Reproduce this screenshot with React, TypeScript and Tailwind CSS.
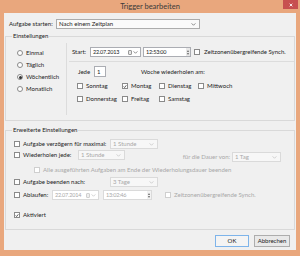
import React from 'react';

const font = { fontFamily: '"Lato", "Open Sans", sans-serif' };

function Check({ checked = false, disabled = false }: { checked?: boolean; disabled?: boolean }) {
  return (
    <span
      className={`flex h-[6px] w-[6px] shrink-0 items-center justify-center border bg-white ${
        disabled ? 'border-[#cfcfcf] bg-[#f4f4f4]' : 'border-[#8a8a8a]'
      }`}
    >
      {checked && (
        <svg viewBox="0 0 6 6" className="h-[5px] w-[5px]">
          <path d="M1 3 L2.4 4.5 L5 1.2" fill="none" stroke="#222" strokeWidth="1.1" />
        </svg>
      )}
    </span>
  );
}

function Radio({ checked = false }: { checked?: boolean }) {
  return (
    <span className="flex h-[6px] w-[6px] shrink-0 items-center justify-center rounded-full border border-[#8a8a8a] bg-white">
      {checked && <span className="h-[3px] w-[3px] rounded-full bg-[#333]" />}
    </span>
  );
}

function Arrow({ light = false }: { light?: boolean }) {
  return (
    <svg viewBox="0 0 6 4" className="h-[3px] w-[5px]">
      <path d="M0.5 0.5 L3 3 L5.5 0.5" fill="none" stroke={light ? '#bdbdbd' : '#555'} strokeWidth="0.9" />
    </svg>
  );
}

function Combo({ text, w, disabled = false }: { text: string; w: string; disabled?: boolean }) {
  return (
    <div
      className={`flex h-[10px] items-center justify-between border pl-[2px] pr-[3px] ${w} ${
        disabled ? 'border-[#dadada] bg-[#f7f7f7] text-[#a8a8a8]' : 'border-[#acacac] bg-[#fafafa] text-[#222]'
      }`}
    >
      <span>{text}</span>
      <Arrow light={disabled} />
    </div>
  );
}

function DateBox({ text, w, disabled = false }: { text: string; w: string; disabled?: boolean }) {
  return (
    <div
      className={`flex h-[10px] items-center justify-between border bg-white pl-[2px] pr-[2px] ${w} ${
        disabled ? 'border-[#dadada] text-[#a8a8a8]' : 'border-[#abadb3] text-[#222]'
      }`}
    >
      <span className="text-[5.5px] tracking-[-0.2px]">{text}</span>
      <span className="flex items-center gap-[1px]">
        <span className={`h-[5px] w-[4px] rounded-[1px] border ${disabled ? 'border-[#d0d0d0] bg-[#eee]' : 'border-[#9a9a9a] bg-[#e6e6e6]'}`} />
        <Arrow light={disabled} />
      </span>
    </div>
  );
}

function TimeBox({ text, w, disabled = false }: { text: string; w: string; disabled?: boolean }) {
  return (
    <div
      className={`flex h-[10px] items-center justify-between border bg-white pl-[2px] ${w} ${
        disabled ? 'border-[#dadada] text-[#a8a8a8]' : 'border-[#abadb3] text-[#222]'
      }`}
    >
      <span className="text-[5.5px] tracking-[-0.2px]">{text}</span>
      <span className={`flex h-full w-[4px] flex-col items-center justify-center gap-[1px] ${disabled ? 'bg-[#f2f2f2]' : 'bg-[#e8e8e8]'}`}>
        <span className="h-0 w-0 border-x-[1.5px] border-b-[2px] border-x-transparent border-b-[#666]" />
        <span className="h-0 w-0 border-x-[1.5px] border-t-[2px] border-x-transparent border-t-[#666]" />
      </span>
    </div>
  );
}

export default function App() {
  return (
    <div className="flex h-[256px] w-[300px] flex-col bg-[#e9a77d] text-[6px] leading-[8px] text-[#222]" style={font}>
      {/* Title bar */}
      <div className="relative flex h-[13px] items-center justify-center">
        <span className="text-[7.5px] text-[#3a3a3a]">Trigger bearbeiten</span>
        <div className="absolute right-[2px] top-0 flex h-[9px] w-[15px] items-center justify-center bg-[#c75050]">
          <svg viewBox="0 0 6 6" className="h-[4px] w-[4px]">
            <path d="M1 1 L5 5 M5 1 L1 5" stroke="#fff" strokeWidth="1.3" />
          </svg>
        </div>
      </div>

      {/* Client area */}
      <div className="mx-[4px] flex h-[237px] flex-col bg-[#f0f0f0]">
        <div className="mt-[6px] flex h-[10px] items-center">
          <span className="ml-[5px] w-[47px]">Aufgabe starten:</span>
          <Combo text="Nach einem Zeitplan" w="w-[144px]" />
        </div>

        {/* Einstellungen */}
        <fieldset className="mx-[1px] mt-[3px] h-[89px] border border-[#d9d9d9]">
          <legend className="ml-[6px] px-[1px]">Einstellungen</legend>
          <div className="flex">
            <div className="my-[3px] flex w-[61px] flex-col border-r border-[#dcdcdc] pb-[20px] pl-[11px] pt-[4px]">
              {[
                ['Einmal', false],
                ['Täglich', false],
                ['Wöchentlich', true],
                ['Monatlich', false],
              ].map(([label, on]) => (
                <div key={label as string} className="flex h-[12px] items-center gap-[3px]">
                  <Radio checked={on as boolean} />
                  <span>{label as string}</span>
                </div>
              ))}
            </div>
            <div className="flex flex-1 flex-col">
              <div className="mt-[7px] flex h-[10px] items-center">
                <span className="ml-[5px] w-[18px]">Start:</span>
                <DateBox text="22.07.2013" w="w-[51px]" />
                <span className="ml-[2px]">
                  <TimeBox text="12:53:00" w="w-[48px]" />
                </span>
                <span className="ml-[3px] flex items-center gap-[4px]">
                  <Check />
                  <span>Zeitzonenübergreifende Synch.</span>
                </span>
              </div>
              <div className="ml-[2px] mt-[4px] h-px bg-[#dcdcdc]" />
              <div className="mt-[4px] flex h-[11px] items-center">
                <span className="ml-[11px] w-[16px]">Jede</span>
                <span className="flex h-[11px] w-[12px] items-center border border-[#abadb3] bg-white pl-[2px]">1</span>
                <span className="ml-[35px]">Woche wiederholen am:</span>
              </div>
              <div className="mt-[4px] grid h-[10px] grid-cols-[45px_37px_39px_1fr] items-center pl-[10px]">
                {[
                  ['Sonntag', false],
                  ['Montag', true],
                  ['Dienstag', false],
                  ['Mittwoch', false],
                ].map(([label, on]) => (
                  <span key={label as string} className="flex items-center gap-[3px]">
                    <Check checked={on as boolean} />
                    <span>{label as string}</span>
                  </span>
                ))}
              </div>
              <div className="mt-[3px] grid h-[10px] grid-cols-[45px_37px_39px_1fr] items-center pl-[10px]">
                {['Donnerstag', 'Freitag', 'Samstag'].map((label) => (
                  <span key={label} className="flex items-center gap-[3px]">
                    <Check />
                    <span>{label}</span>
                  </span>
                ))}
              </div>
            </div>
          </div>
        </fieldset>

        {/* Erweiterte Einstellungen */}
        <fieldset className="mx-[1px] mt-[5px] h-[104px] border border-[#d9d9d9] pl-[8px]">
          <legend className="ml-[-2px] px-[1px]">Erweiterte Einstellungen</legend>
          <div className="mt-[5px] flex h-[10px] items-center">
            <span className="flex w-[96px] items-center gap-[3px]">
              <Check />
              <span>Aufgabe verzögern für maximal:</span>
            </span>
            <Combo text="1 Stunde" w="w-[48px]" disabled />
          </div>
          <div className="mt-[1px] flex h-[12px] items-start">
            <span className="flex h-[10px] w-[64px] items-center gap-[3px]">
              <Check />
              <span>Wiederholen jede:</span>
            </span>
            <Combo text="1 Stunde" w="w-[47px]" disabled />
            <span className="mt-[2px] flex h-[10px] items-center">
              <span className="w-[107px] pr-[2px] text-right text-[#a8a8a8]">für die Dauer von:</span>
              <Combo text="1 Tag" w="w-[49px]" disabled />
            </span>
          </div>
          <div className="mt-[3px] flex h-[10px] items-center gap-[3px] pl-[20px] text-[#a8a8a8]">
            <Check disabled />
            <span>Alle ausgeführten Aufgaben am Ende der Wiederholungsdauer beenden</span>
          </div>
          <div className="mt-[2px] flex h-[10px] items-center">
            <span className="flex w-[96px] items-center gap-[3px]">
              <Check />
              <span>Aufgabe beenden nach:</span>
            </span>
            <Combo text="3 Tage" w="w-[48px]" disabled />
          </div>
          <div className="mt-[3px] flex h-[10px] items-center">
            <span className="flex w-[38px] items-center gap-[3px]">
              <Check />
              <span>Ablaufen:</span>
            </span>
            <DateBox text="22.07.2014" w="w-[47px]" disabled />
            <span className="ml-[4px]">
              <TimeBox text="13:02:46" w="w-[49px]" disabled />
            </span>
            <span className="ml-[13px] flex items-center gap-[3px] text-[#a8a8a8]">
              <Check disabled />
              <span>Zeitzonenübergreifende Synch.</span>
            </span>
          </div>
          <div className="mt-[10px] flex h-[10px] items-center gap-[3px]">
            <Check checked />
            <span>Aktiviert</span>
          </div>
        </fieldset>

        <div className="mr-[6px] mt-[5px] flex justify-end gap-[5px]">
          <div className="flex h-[12px] w-[34px] items-center justify-center border border-[#7eb4ea] bg-[#f4f4f4]">OK</div>
          <div className="flex h-[12px] w-[36px] items-center justify-center border border-[#adadad] bg-[#e9e9e9]">Abbrechen</div>
        </div>
      </div>
    </div>
  );
}
